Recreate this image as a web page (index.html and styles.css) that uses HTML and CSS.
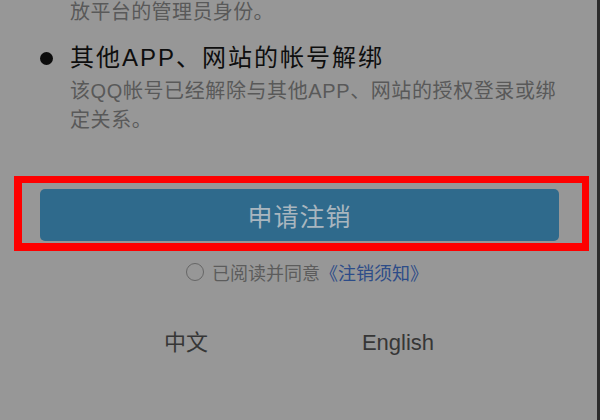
FILE: index.html
```html
<!DOCTYPE html>
<html lang="zh-CN">
<head>
<meta charset="utf-8">
<title>申请注销</title>
<link rel="stylesheet" href="styles.css">
</head>
<body>
<div class="screen">
  <div class="notes">
    <p class="lead">放平台的管理员身份。</p>
    <h2 class="heading">其他APP、网站的帐号解绑</h2>
    <p class="desc">该QQ帐号已经解除与其他APP、网站的授权登录或绑定关系。</p>
  </div>
  <div class="btn-wrap">
    <button class="apply" type="button">申请注销</button>
    <div class="highlight"></div>
  </div>
  <div class="agree">
    <span class="radio"></span>
    <span class="agree-text">已阅读并同意<a class="link" href="#">《注销须知》</a></span>
  </div>
  <div class="lang">
    <span class="lang-item">中文</span>
    <span class="lang-item">English</span>
  </div>
</div>
</body>
</html>
```

FILE: styles.css
```css
* { box-sizing: border-box; }

html, body {
  margin: 0;
  padding: 0;
  width: 600px;
  height: 420px;
  overflow: hidden;
  background: #979797;
  font-family: "Liberation Sans", "Noto Sans CJK SC", sans-serif;
}

.screen {
  width: 600px;
  height: 420px;
  border-right: 3px solid #2c2c2c;
  display: flex;
  flex-direction: column;
}

.notes {
  padding-left: 70px;
  width: 565px;
}

.lead {
  margin: -2px 0 0;
  font-size: 20px;
  line-height: 29px;
  letter-spacing: 0.4px;
  color: #595959;
}

.heading {
  margin: 14px 0 0 -30px;
  display: flex;
  align-items: center;
  font-size: 24px;
  line-height: 34px;
  font-weight: normal;
  letter-spacing: 2px;
  color: #0e0e0e;
}

.heading::before {
  content: "";
  width: 13px;
  height: 13px;
  border-radius: 50%;
  background: #0c0c0c;
  margin-right: 17px;
  flex: none;
}

.desc {
  margin: 2px 0 0;
  font-size: 20px;
  line-height: 29px;
  letter-spacing: 0.6px;
  color: #595959;
}

.btn-wrap {
  position: relative;
  margin: 54px 0 0 40px;
  width: 519px;
  height: 52px;
}

.apply {
  display: block;
  width: 100%;
  height: 100%;
  border: none;
  border-radius: 5px;
  background: #2f6a8c;
  color: #a9b6bf;
  font-family: "Noto Sans CJK SC", sans-serif;
  font-size: 25px;
  letter-spacing: 1px;
  padding: 0;
}

.highlight {
  position: absolute;
  top: -13px;
  left: -26px;
  right: -30px;
  bottom: -10px;
  border: 8px solid #fe0000;
  border-top-width: 7px;
  border-right-width: 7px;
  pointer-events: none;
}

.agree {
  margin-top: 19px;
  height: 24px;
  padding-left: 186px;
  display: flex;
  align-items: center;
  gap: 8px;
}

.radio {
  width: 18px;
  height: 18px;
  border: 1.5px solid #666;
  border-radius: 50%;
  flex: none;
}

.agree-text {
  font-family: "Noto Sans CJK SC", sans-serif;
  font-size: 18px;
  line-height: 24px;
  color: #5c5c5c;
}

.link {
  color: #2d4c88;
  text-decoration: none;
}

.lang {
  margin-top: 44px;
  padding-left: 80px;
  display: grid;
  grid-template-columns: 212px 212px;
  line-height: 30px;
  font-size: 22px;
  color: #363636;
}

.lang-item {
  text-align: center;
}
```
